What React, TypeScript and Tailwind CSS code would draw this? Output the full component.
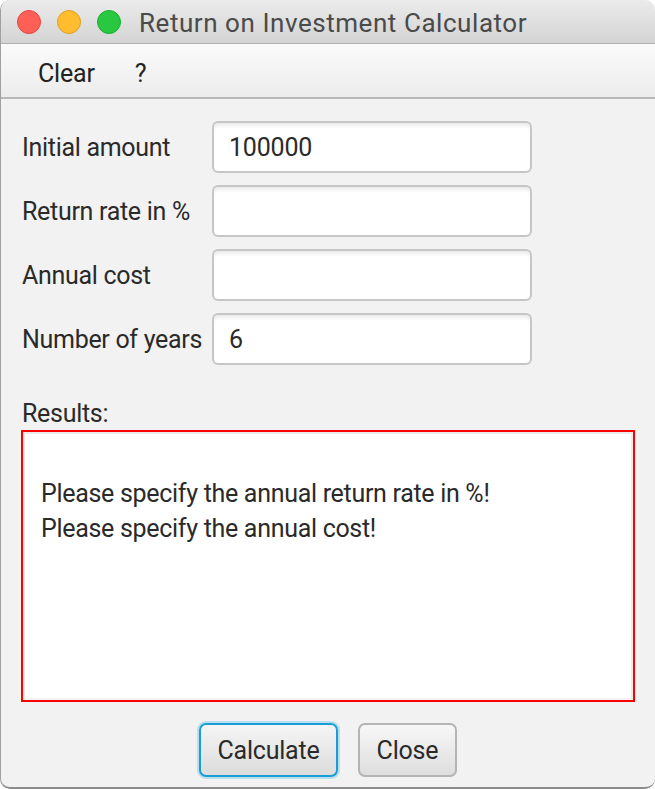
import React from "react";

const font = { fontFamily: "Roboto, 'Noto Sans', sans-serif" };

function Field({ label, value }: { label: string; value?: string }) {
  return (
    <div className="flex items-center h-[52px]">
      <div className="w-[190px] whitespace-nowrap text-[25px] text-[#2a2a2a] leading-none tracking-[-0.3px] pt-[1px]">{label}</div>
      <div className="w-[320px] h-[52px] bg-white border-2 border-[#c6c6c6] rounded-[6px] shadow-[inset_0_4px_4px_-2px_rgba(0,0,0,0.10)] flex items-center pl-[15px] text-[25px] text-[#2a2a2a] tracking-[-0.2px] pt-[1px]">
        {value}
      </div>
    </div>
  );
}

export default function App() {
  return (
    <div className="w-[655px] h-[789px] bg-white" style={font}>
      <div className="h-[789px] flex flex-col rounded-t-[10px] rounded-b-[10px] border-l border-[#a0a0a0] border-b-2 border-b-[#8c8c8c] overflow-hidden bg-[#f2f2f2]">
        {/* title bar */}
        <div className="h-[44px] shrink-0 flex items-center bg-gradient-to-b from-[#ebebeb] to-[#d4d4d4] border-b border-[#b0b0b0] pl-[16px]">
          <div className="w-[24px] h-[24px] rounded-full bg-[#fe5f57] border border-[#e2463f]" />
          <div className="w-[24px] h-[24px] rounded-full bg-[#febc2e] border border-[#dfa023] ml-[16px]" />
          <div className="w-[24px] h-[24px] rounded-full bg-[#28c840] border border-[#1dac2c] ml-[16px]" />
          <div className="ml-[18px] text-[26px] text-[#4a4a4a] tracking-[0.55px] leading-none pt-[2px]">Return on Investment Calculator</div>
        </div>
        {/* menu bar */}
        <div className="h-[55px] shrink-0 flex items-center bg-gradient-to-b from-[#fbfbfb] to-[#ececec] border-b-2 border-[#b8b8b8] pl-[37px] pt-[5px] text-[25px] text-[#222] leading-none tracking-[-0.2px]">
          <span>Clear</span>
          <span className="ml-[40px]">?</span>
        </div>
        {/* content */}
        <div className="flex-1 flex flex-col pl-[21px] pr-[20px] pt-[22px]">
          <div className="flex flex-col gap-[12px]">
            <Field label="Initial amount" value="100000" />
            <Field label="Return rate in %" />
            <Field label="Annual cost" />
            <Field label="Number of years" value="6" />
          </div>
          <div className="mt-[33px] h-[32px] text-[25px] leading-[32px] text-[#2a2a2a] tracking-[-0.3px]">Results:</div>
          <div className="-ml-[1px] w-[614px] h-[272px] border-2 border-[#ff0000] bg-white">
            <div className="h-full border-2 border-[#ececec] border-b-[#f4f4f4] pl-[16px] pt-[42px] text-[25px] leading-[35px] text-[#2a2a2a] tracking-[-0.3px]">
              <div>Please specify the annual return rate in %!</div>
              <div>Please specify the annual cost!</div>
            </div>
          </div>
          <div className="mt-[21px] flex justify-center gap-[20px] -ml-[21px] -mr-[20px]">
            <button className="w-[139px] h-[54px] rounded-[7px] border-2 border-[#1a9ed6] ring-2 ring-[#b8def0] bg-gradient-to-b from-[#f5f5f5] to-[#dcdcdc] text-[25px] text-[#2a2a2a] tracking-[-0.2px] leading-none">
              Calculate
            </button>
            <button className="w-[99px] h-[54px] rounded-[7px] border-2 border-[#b4b4b4] bg-gradient-to-b from-[#f7f7f7] to-[#dedede] text-[25px] text-[#2a2a2a] tracking-[-0.2px] leading-none">
              Close
            </button>
          </div>
        </div>
      </div>
    </div>
  );
}
